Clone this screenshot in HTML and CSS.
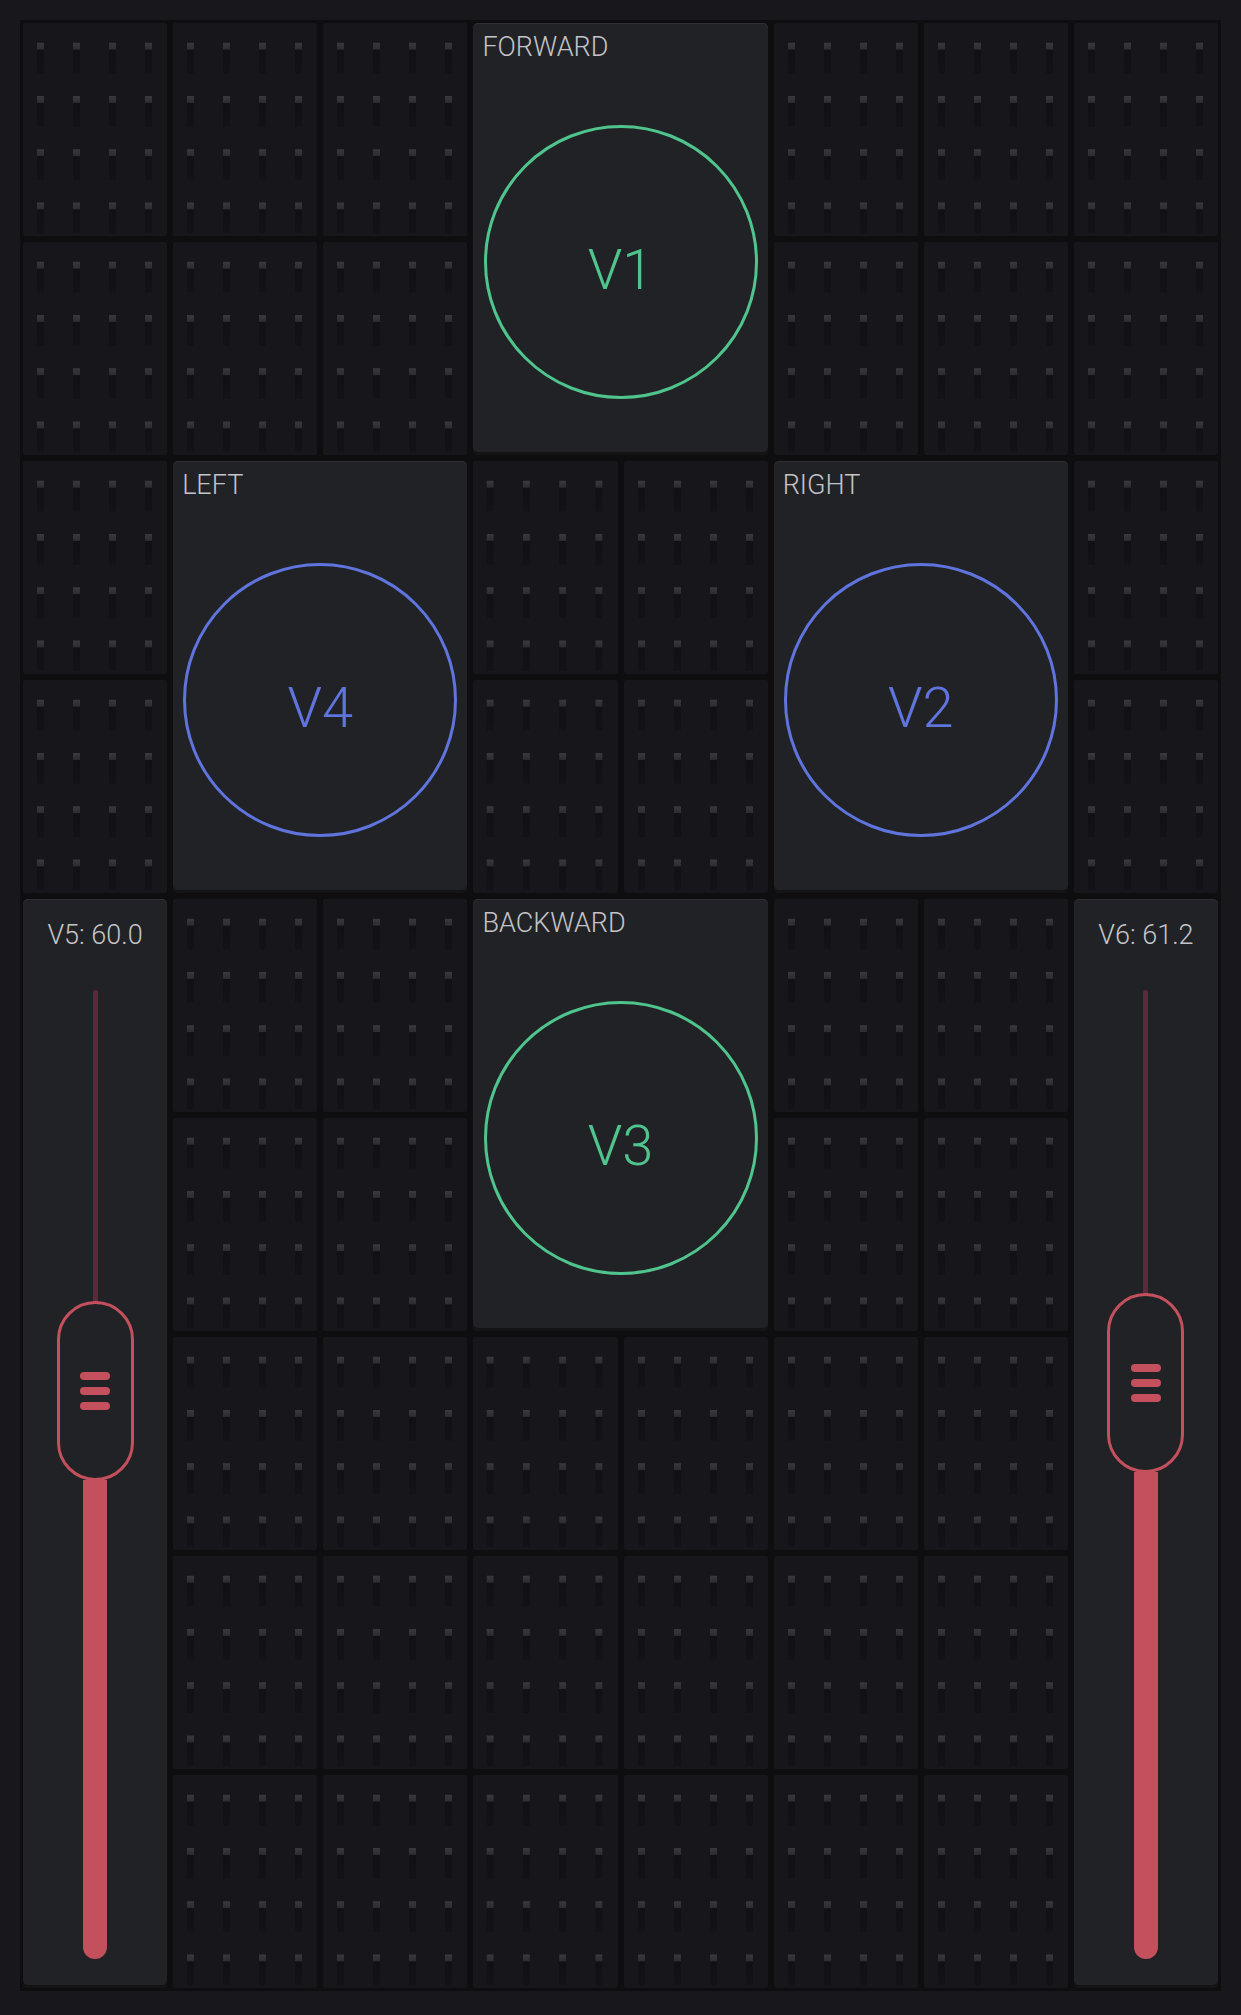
FILE: index.html
```html
<!DOCTYPE html>
<html lang="en">
<head>
<meta charset="utf-8">
<title>Robot control</title>
<link rel="stylesheet" href="styles.css">
</head>
<body>
<div class="board">
  <div class="grid">
    <section class="widget button w-forward">
      <div class="title">FORWARD</div>
      <div class="body"><div class="ring green">V1</div></div>
    </section>
    <section class="widget button w-left">
      <div class="title">LEFT</div>
      <div class="body"><div class="ring blue">V4</div></div>
    </section>
    <section class="widget button w-right">
      <div class="title">RIGHT</div>
      <div class="body"><div class="ring blue">V2</div></div>
    </section>
    <section class="widget button w-backward">
      <div class="title">BACKWARD</div>
      <div class="body"><div class="ring green">V3</div></div>
    </section>
    <section class="widget slider w-v5">
      <div class="slabel">V5: 60.0</div>
      <div class="track">
        <div class="rail" style="height:312px"></div>
        <div class="knob"><span></span><span></span><span></span></div>
        <div class="fill"></div>
      </div>
    </section>
    <section class="widget slider w-v6">
      <div class="slabel">V6: 61.2</div>
      <div class="track">
        <div class="rail" style="height:304px"></div>
        <div class="knob"><span></span><span></span><span></span></div>
        <div class="fill"></div>
      </div>
    </section>

    <div class="cell"></div><div class="cell"></div><div class="cell"></div><div class="cell"></div><div class="cell"></div>
    <div class="cell"></div><div class="cell"></div><div class="cell"></div><div class="cell"></div><div class="cell"></div>
    <div class="cell"></div><div class="cell"></div><div class="cell"></div><div class="cell"></div><div class="cell"></div>
    <div class="cell"></div><div class="cell"></div><div class="cell"></div><div class="cell"></div><div class="cell"></div>
    <div class="cell"></div><div class="cell"></div><div class="cell"></div><div class="cell"></div><div class="cell"></div>
    <div class="cell"></div><div class="cell"></div><div class="cell"></div><div class="cell"></div><div class="cell"></div>
    <div class="cell"></div><div class="cell"></div><div class="cell"></div><div class="cell"></div><div class="cell"></div>
    <div class="cell"></div><div class="cell"></div><div class="cell"></div><div class="cell"></div><div class="cell"></div>
    <div class="cell"></div><div class="cell"></div><div class="cell"></div><div class="cell"></div><div class="cell"></div>
    <div class="cell"></div>
  </div>
</div>
</body>
</html>
```
FILE: styles.css
```css
* { box-sizing: border-box; }

html, body {
  margin: 0;
  padding: 0;
  background: #18181c;
}

body {
  font-family: Roboto, "Liberation Sans", sans-serif;
  color: #c2c2c6;
}

.board {
  width: 1241px;
  height: 2015px;
  padding: 20px 20px 24px;
}

.grid {
  height: 100%;
  display: grid;
  grid-template-columns: repeat(8, 1fr);
  grid-template-rows: repeat(9, 1fr);
  gap: 6px;
  padding: 3px;
  background: #0e0e11;
}

/* empty breadboard cells */
.cell {
  position: relative;
  background: #16161b;
  border-radius: 2px;
}

.cell::before {
  content: "";
  position: absolute;
  inset: 0;
  background-image: linear-gradient(to bottom,
    transparent 0, transparent 20px,
    #38383d 20px, #2b2b30 27px,
    #111115 27px, #131317 50px,
    transparent 50px);
  background-size: 25% 25%;
  -webkit-mask-image: linear-gradient(to right, transparent 0, transparent 14px, #000 14px, #000 21px, transparent 21px);
  -webkit-mask-size: 25% 25%;
  mask-image: linear-gradient(to right, transparent 0, transparent 14px, #000 14px, #000 21px, transparent 21px);
  mask-size: 25% 25%;
}

/* widgets */
.widget {
  background: #212226;
  border-radius: 5px;
  box-shadow: inset 0 1px 0 #2e3035, inset 0 -3px 0 #141417;
  display: flex;
  flex-direction: column;
}

.w-forward  { grid-column: 4 / span 2; grid-row: 1 / span 2; }
.w-left     { grid-column: 2 / span 2; grid-row: 3 / span 2; }
.w-right    { grid-column: 6 / span 2; grid-row: 3 / span 2; }
.w-backward { grid-column: 4 / span 2; grid-row: 5 / span 2; }
.w-v5       { grid-column: 1; grid-row: 5 / span 5; }
.w-v6       { grid-column: 8; grid-row: 5 / span 5; }

.title {
  height: 42px;
  padding: 8px 9px 2px;
  font-size: 27px;
  font-weight: 300;
  line-height: 32px;
  color: #c4c4c8;
  white-space: nowrap;
}

.body {
  flex: 1;
  display: flex;
  align-items: center;
  justify-content: center;
  padding-top: 4px;
}

.ring {
  width: 274px;
  height: 274px;
  border-radius: 50%;
  border: 3px solid currentColor;
  display: flex;
  align-items: center;
  justify-content: center;
  padding-top: 16px;
  font-size: 56px;
  font-weight: 300;
  line-height: 1;
}

.green { color: #50c48d; }
.blue  { color: #5f74dc; }

/* sliders */
.slabel {
  padding-top: 20px;
  font-size: 27px;
  font-weight: 300;
  line-height: 32px;
  text-align: center;
  color: #c4c4c8;
  white-space: nowrap;
}

.track {
  flex: 1;
  margin: 39px 0 29px;
  display: flex;
  flex-direction: column;
  align-items: center;
}

.rail {
  width: 5px;
  background: #5a2a3b;
  border-radius: 3px 3px 0 0;
  margin-bottom: -1px;
}

.knob {
  width: 77px;
  height: 180px;
  border: 3px solid #c4505e;
  border-radius: 39px;
  background: #212226;
  display: flex;
  flex-direction: column;
  align-items: center;
  justify-content: center;
  gap: 7px;
  flex-shrink: 0;
}

.knob span {
  width: 30px;
  height: 8px;
  border-radius: 4px;
  background: #c4505e;
}

.fill {
  flex: 1;
  width: 24px;
  margin-top: -1px;
  background: #c4505e;
  border-radius: 0 0 12px 12px;
}
```
